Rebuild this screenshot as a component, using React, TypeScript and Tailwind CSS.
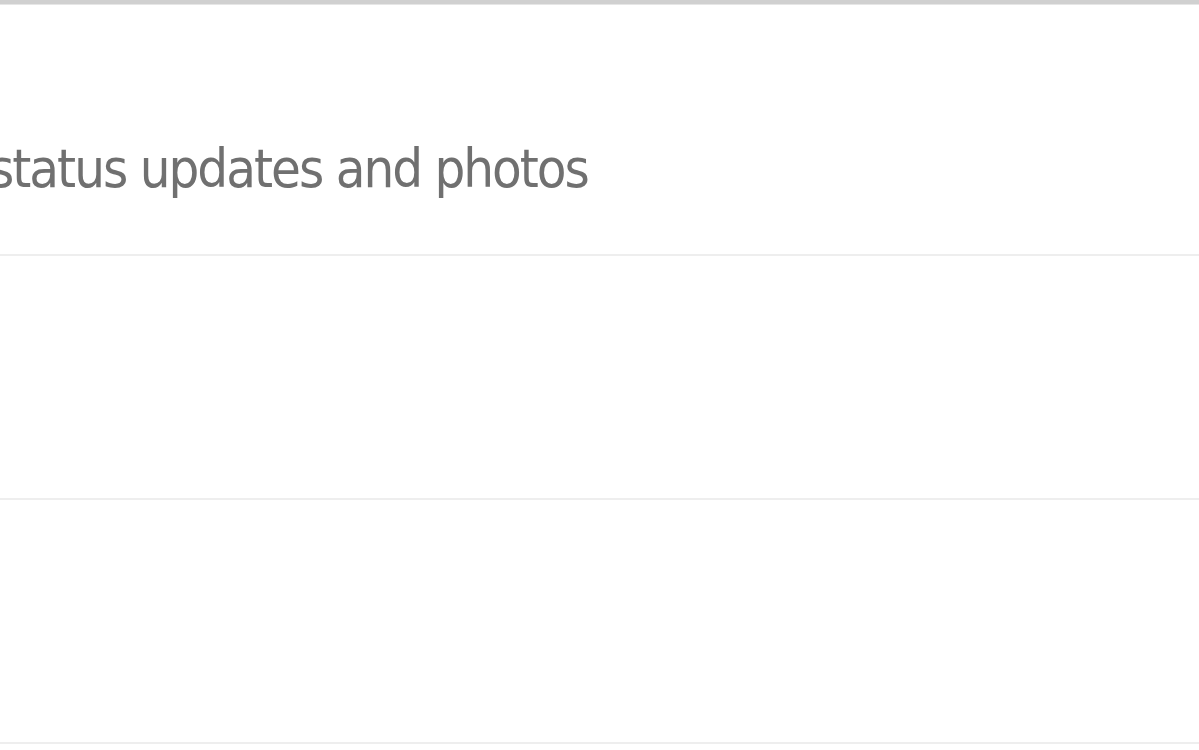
import React from "react";

export default function App() {
  return (
    <div className="w-[1199px] h-[750px] overflow-hidden bg-white">
      <div className="h-[4px] bg-[#d0d0d0]" />
      <div className="h-[1px] bg-[#e6e6e6]" />
      <div className="h-[251px] border-b-2 border-[#eeeeee] pt-[132px]">
        <div
          className="ml-[-11px] text-[54px] leading-[64px] text-[#707070] tracking-[-2px] whitespace-nowrap"
          style={{ fontFamily: '"DejaVu Sans Condensed", "DejaVu Sans", Verdana, sans-serif' }}
        >
          status updates and photos
        </div>
      </div>
      <div className="h-[244px] border-b-2 border-[#eeeeee]" />
      <div className="h-[244px] border-b-2 border-[#eeeeee]" />
    </div>
  );
}
